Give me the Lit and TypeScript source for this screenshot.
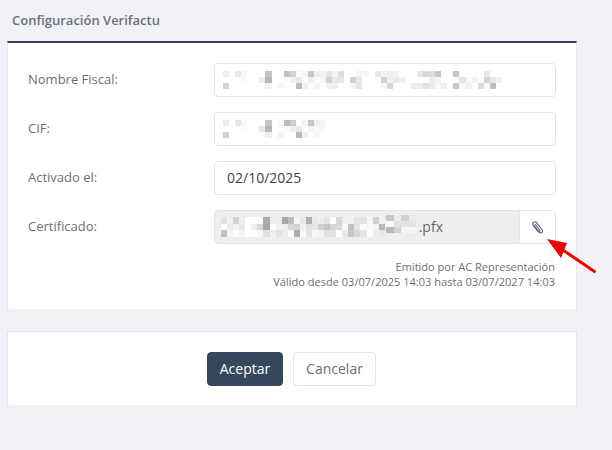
import { LitElement, html, css } from "lit";
import { customElement } from "lit/decorators.js";
import { styleMap } from "lit/directives/style-map.js";

const NAME = [
  "ee ff e8 f8 ff ff ff c4 ff ff c2 d2 fb f4 c8 f0 f4 e4 f4 dd ff ff f4 f6 ff e8 f4 ee f2 ff ff ff e8 d8 dc c4 ff ff c4 ff ff ff ff e8 ff ff",
  "ff ff ff fb ff ff eb b8 ff ff fa f0 e8 fb f0 fb f6 d0 e6 e6 ff d0 e8 ff ff fb d2 f2 ea f0 ff ff ff ff ec f4 ff ff ff e4 f8 f4 fc d4 e8 f0",
  "d4 ff ff ff ff ff ff f2 ff f6 ff ff bc f0 fc f4 ff f0 f0 ff ff f4 e4 ff ff ff f8 d8 ff ff ff ec ec e0 ec fa f0 ff c8 f8 f0 ff dc fa bc ff",
];
const CIF = [
  "ec ff e4 f8 ff ff ff c4 ff f8 bc cc ff f4 c4 f0 f6",
  "ff ff ff fb ff ff e8 b8 ff ff fb f0 e8 fb f4 fb f8",
  "d0 ff ff ff ff ff ff f0 ff f4 ff ff b8 ef fc f8 ff",
];
const CERT = [
  "e0 f0 d4 ee ff ff fc ac ee ee a8 c0 f6 e6 b0 e8 ec e4 ff d8 f0 f0 e4 e4 f4 d0 f0",
  "fc ec f2 e8 ff f0 d8 a8 fc f2 f0 d8 d4 f0 e2 e4 d0 c4 d4 d8 f8 c0 e4 fc f8 f4 b8",
  "c0 f4 fc f4 ff ff f6 e0 f0 e4 ee ff ac f8 e4 f8 f4 e0 e0 ff e8 c8 d8 e4 fc ee e8",
];
const CERT_END = [
  "c8 ec d0 ea",
  "fa e2 e4 e4",
  "b8 d4 f6 f6",
];

function mosaic(rows: string[], w: number, h: number, cls = "") {
  const rowStyle = styleMap({ height: `${h}px` });
  const cellStyle = (v: string) =>
    styleMap({ width: `${w}px`, background: `#${v}${v}${v}` });
  return html`<div class="mosaic ${cls}">
    ${rows.map(
      (r) => html`<div class="mrow" style=${rowStyle}>
        ${r.split(" ").map((v) => html`<i style=${cellStyle(v)}></i>`)}
      </div>`
    )}
  </div>`;
}

@customElement("app-root")
export class AppRoot extends LitElement {
  static styles = css`
    :host {
      display: block;
      position: relative;
      width: 612px;
      height: 450px;
      overflow: hidden;
      box-sizing: border-box;
      padding: 0 35px 0 7px;
      background: #f1f2f7;
      font-family: "Open Sans", sans-serif;
      font-size: 13px;
      color: #6b6f76;
    }
    .title {
      height: 41px;
      box-sizing: border-box;
      padding: 11px 0 0 5px;
      font-size: 13px;
      line-height: 18px;
      font-weight: 600;
      color: #6b6f76;
    }
    .panel {
      height: 270px;
      box-sizing: border-box;
      background: #fff;
      border: 1px solid #e4e6ea;
      border-top: 2px solid #34475d;
      padding: 20px 20px 0 20px;
    }
    .row {
      display: flex;
      align-items: center;
      height: 34px;
      margin-bottom: 15px;
    }
    .row label {
      width: 186px;
      flex: none;
      line-height: 18px;
      padding-bottom: 2px;
    }
    .field {
      flex: 1;
      height: 34px;
      box-sizing: border-box;
      border: 1px solid #e4e4e4;
      border-radius: 4px;
      background: #fff;
      display: flex;
      align-items: center;
      padding-left: 8px;
      font-size: 14px;
      color: #444;
    }
    .date { padding: 0 0 2px 12px; }
    .file {
      flex: 1;
      display: flex;
      height: 34px;
      box-sizing: border-box;
      border: 1px solid #e4e4e4;
      border-radius: 4px;
      overflow: hidden;
    }
    .file-name {
      flex: 1;
      position: relative;
      background: #eeeeee;
      display: flex;
      align-items: center;
      padding: 0 0 0 6px;
      font-size: 14px;
      color: #666;
    }
    .ext { margin-left: 34px; padding-bottom: 1px; }
    .attach {
      width: 35px;
      flex: none;
      border-left: 1px solid #e4e4e4;
      background: #fff;
      display: flex;
      align-items: center;
      justify-content: center;
    }
    .mosaic { flex: none; }
    .mrow { display: flex; }
    .mrow i { display: block; flex: none; }
    .overlay { position: absolute; left: 171px; top: 4px; }
    .note {
      text-align: right;
      font-size: 11px;
      line-height: 15px;
      padding-right: 1px;
      color: #6b6f76;
    }
    .note .wide { letter-spacing: 0.02px; }
    .actions {
      margin-top: 20px;
      height: 76px;
      box-sizing: border-box;
      background: #fff;
      border: 1px solid #e4e6ea;
      display: flex;
      align-items: center;
      justify-content: center;
      gap: 10px;
      padding-right: 1px;
    }
    button {
      height: 34px;
      box-sizing: border-box;
      border-radius: 4px;
      font-family: inherit;
      font-size: 14px;
      padding: 0 0 2px;
    }
    .ok {
      width: 76px;
      background: #34475d;
      border: 1px solid #34475d;
      color: #fff;
    }
    .cancel {
      width: 83px;
      background: #fff;
      border: 1px solid #e4e4e4;
      color: #6b6f76;
    }
    .arrow {
      position: absolute;
      left: 540px;
      top: 232px;
      width: 60px;
      height: 46px;
    }
  `;

  render() {
    return html`
      <div class="title">Configuración Verifactu</div>
      <div class="panel">
        <div class="row">
          <label>Nombre Fiscal:</label>
          <div class="field">${mosaic(NAME, 6.07, 6)}</div>
        </div>
        <div class="row">
          <label>CIF:</label>
          <div class="field">${mosaic(CIF, 6.07, 6)}</div>
        </div>
        <div class="row">
          <label>Activado el:</label>
          <div class="field date">02/10/2025</div>
        </div>
        <div class="row">
          <label>Certificado:</label>
          <div class="file">
            <div class="file-name">
              ${mosaic(CERT, 6.07, 6.67)}
              ${mosaic(CERT_END, 7.6, 6, "overlay")}
              <span class="ext">.pfx</span>
            </div>
            <div class="attach">
              <svg width="14" height="14" viewBox="0.5 -1 14 14" fill="none">
                <path
                  d="M3.4 4.4 8.3 10.9c.9 1.1 2.2 1.4 3.1.7.9-.7 1-2 .1-3.1L6.1 1.7C5.4.8 4.2.6 3.3 1.2 2 2 1.9 3.3 2.6 4.2l4.9 6.3c.5.6 1.1.7 1.6.3.5-.4.5-1 .1-1.6L4.8 3.2"
                  stroke="#46577a"
                  stroke-width="1.05"
                  stroke-linecap="round"
                />
              </svg>
            </div>
          </div>
        </div>
        <div class="note">
          Emitido por AC Representación<br />
          <span class="wide">Válido desde 03/07/2025 14:03 hasta 03/07/2027 14:03</span>
        </div>
      </div>
      <div class="actions">
        <button class="ok">Aceptar</button>
        <button class="cancel">Cancelar</button>
      </div>
      <svg class="arrow" viewBox="0 0 60 46">
        <path d="M54.5 39.5 L20 16" stroke="#f00000" stroke-width="3" stroke-linecap="round" />
        <path d="M7 7 L27 11 L21 26 Z" fill="#f00000" />
      </svg>
    `;
  }
}
